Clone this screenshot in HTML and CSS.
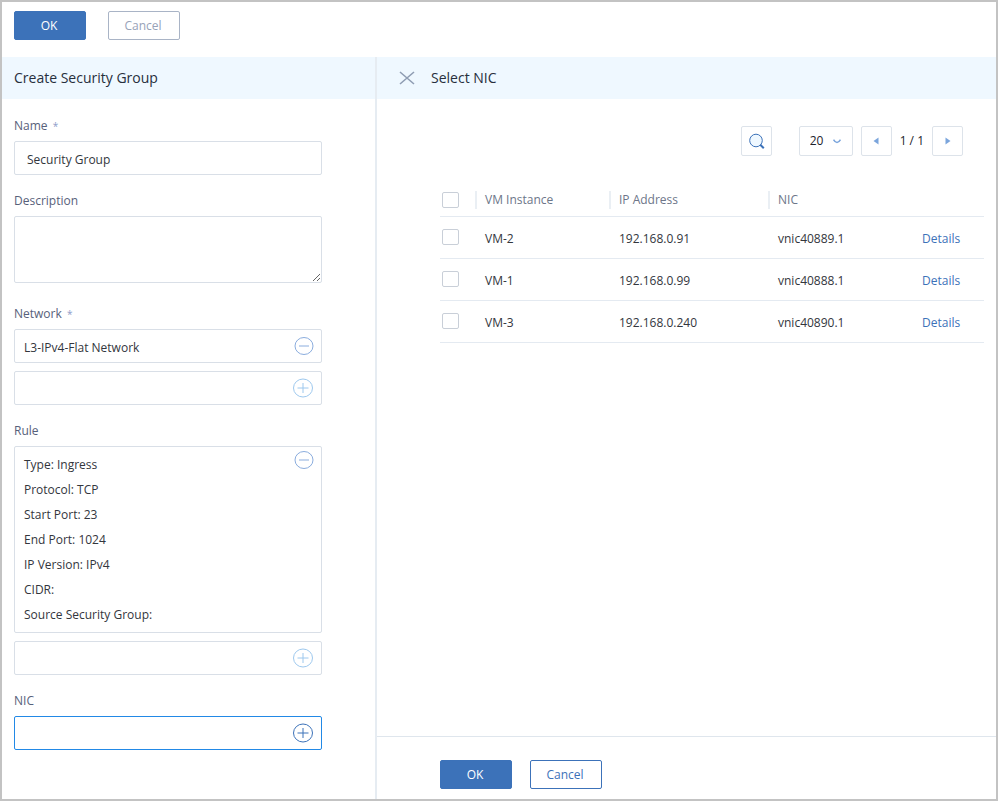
FILE: index.html
```html
<!DOCTYPE html>
<html lang="en">
<head>
<meta charset="UTF-8">
<meta name="viewport" content="width=device-width, initial-scale=1.0">
<title>Create Security Group</title>
<link rel="stylesheet" href="styles.css">
</head>
<body>

<div class="page">
  <header class="topbar">
    <button type="button" class="btn btn-primary">OK</button>
    <button type="button" class="btn btn-muted">Cancel</button>
  </header>

  <div class="content">
    <section class="form-panel">
      <h2 class="panel-title">Create Security Group</h2>
      <form class="form">
        <div class="field">
          <label for="name">Name <span class="required">*</span></label>
          <input type="text" id="name" class="box text-input" value="Security Group">
        </div>
        <div class="field field-description">
          <label for="description">Description</label>
          <textarea id="description" class="box"></textarea>
        </div>
        <div class="field">
          <h3 class="field-label">Network <span class="required">*</span></h3>
          <div class="box picker">
            <span>L3-IPv4-Flat Network</span>
            <button type="button" class="icon-btn minus" aria-label="Remove network">
              <svg width="20" height="20" viewBox="0 0 20 20"><ellipse cx="10" cy="10" rx="9" ry="8.5"/><path d="M5 10h10"/></svg>
            </button>
          </div>
          <div class="box picker">
            <button type="button" class="icon-btn plus" aria-label="Add network">
              <svg width="20" height="20" viewBox="0 0 20 20"><ellipse cx="10" cy="10" rx="9.5" ry="9"/><path d="M4.500 10h11M10 5v10"/></svg>
            </button>
          </div>
        </div>
        <div class="field">
          <h3 class="field-label">Rule</h3>
          <div class="box rule">
            <ul class="rule-list">
              <li>Type: Ingress</li>
              <li>Protocol: TCP</li>
              <li>Start Port: 23</li>
              <li>End Port: 1024</li>
              <li>IP Version: IPv4</li>
              <li>CIDR:</li>
              <li>Source Security Group:</li>
            </ul>
            <button type="button" class="icon-btn minus" aria-label="Remove rule">
              <svg width="20" height="20" viewBox="0 0 20 20"><ellipse cx="10" cy="10" rx="9" ry="8.5"/><path d="M5 10h10"/></svg>
            </button>
          </div>
          <div class="box picker">
            <button type="button" class="icon-btn plus" aria-label="Add rule">
              <svg width="20" height="20" viewBox="0 0 20 20"><ellipse cx="10" cy="10" rx="9.5" ry="9"/><path d="M4.500 10h11M10 5v10"/></svg>
            </button>
          </div>
        </div>
        <div class="field">
          <h3 class="field-label">NIC</h3>
          <div class="box picker active">
            <button type="button" class="icon-btn plus" aria-label="Add NIC">
              <svg width="20" height="20" viewBox="0 0 20 20"><ellipse cx="10" cy="10" rx="9.500" ry="9"/><path d="M4.500 10h11M10 5v10"/></svg>
            </button>
          </div>
        </div>
      </form>
    </section>

    <section class="nic-panel">
      <div class="panel-title nic-title">
        <button type="button" class="close" aria-label="Close">
          <svg width="16" height="14" viewBox="0 0 16 14"><path d="M1 1l14 12M15 1L1 13"/></svg>
        </button>
        <h2>Select NIC</h2>
      </div>

      <div class="toolbar">
        <button type="button" class="tool search" aria-label="Search">
          <svg width="17" height="17" viewBox="0 0 17 17"><circle cx="8" cy="7.500" r="6.300"/><path d="M12.300 11.800l3.500 3.500" stroke-width="2"/></svg>
        </button>
        <div class="page-size">
          <select class="tool" aria-label="Rows per page">
            <option>20</option>
            <option>50</option>
            <option>100</option>
          </select>
          <svg class="chevron" width="8" height="5" viewBox="0 0 8 5"><path d="M.5 .7Q2 3.500 4 3.500T7.500 .7"/></svg>
        </div>
        <button type="button" class="tool" aria-label="Previous page">
          <svg width="6" height="8" viewBox="0 0 6 8"><path class="arrow" d="M5.500 .5v7L.5 4z"/></svg>
        </button>
        <span class="page-number">1 / 1</span>
        <button type="button" class="tool" aria-label="Next page">
          <svg width="6" height="8" viewBox="0 0 6 8"><path class="arrow" d="M.5 .5v7L5.500 4z"/></svg>
        </button>
      </div>

      <div class="table-wrap">
        <table class="nic-table">
          <thead>
            <tr>
              <th class="col-check"><input type="checkbox" aria-label="Select all"></th>
              <th class="col-vm"><span>VM Instance</span></th>
              <th class="col-ip"><span>IP Address</span></th>
              <th><span>NIC</span></th>
              <th class="col-details"></th>
            </tr>
          </thead>
          <tbody>
            <tr>
              <td><input type="checkbox" aria-label="Select VM-2"></td>
              <td>VM-2</td>
              <td>192.168.0.91</td>
              <td>vnic40889.1</td>
              <td><a href="#">Details</a></td>
            </tr>
            <tr>
              <td><input type="checkbox" aria-label="Select VM-1"></td>
              <td>VM-1</td>
              <td>192.168.0.99</td>
              <td>vnic40888.1</td>
              <td><a href="#">Details</a></td>
            </tr>
            <tr>
              <td><input type="checkbox" aria-label="Select VM-3"></td>
              <td>VM-3</td>
              <td>192.168.0.240</td>
              <td>vnic40890.1</td>
              <td><a href="#">Details</a></td>
            </tr>
          </tbody>
        </table>
      </div>

      <footer class="nic-footer">
        <button type="button" class="btn btn-primary">OK</button>
        <button type="button" class="btn btn-outline">Cancel</button>
      </footer>
    </section>
  </div>
</div>

</body>
</html>
```
FILE: styles.css
```css
* {
  box-sizing: border-box;
}
body {
  margin: 0;
  font-family: "Open Sans", "Noto Sans", sans-serif;
  font-size: 12px;
  line-height: 18px;
  color: #33363d;
  background-color: #fff;
}
button, input, select, textarea {
  font: inherit;
  color: inherit;
}
button {
  padding: 0;
  background: none;
  border: none;
  cursor: pointer;
}
h2, h3 {
  margin: 0;
  font-weight: normal;
}
svg {
  display: block;
  fill: none;
}
.page {
  min-height: 100vh;
  display: flex;
  flex-direction: column;
  border: 2px solid #c3c3c3;
}

/* buttons */
.topbar {
  display: flex;
  gap: 22px;
  padding: 9px 12px 17px;
}
.btn {
  width: 72px;
  height: 29px;
  padding-right: 2px;
  border: 1px solid #3c72b9;
  border-radius: 2px;
}
.btn-primary {
  background-color: #3c72b9;
  color: #fff;
}
.btn-muted {
  border-color: #a9b4c6;
  color: #97a2b8;
}
.btn-outline {
  background-color: #fff;
  color: #3c72b9;
}

/* panels */
.content {
  flex: 1;
  display: flex;
}
.form-panel {
  width: 375px;
  border-right: 2px solid #e6ecf2;
}
.nic-panel {
  flex: 1;
  display: flex;
  flex-direction: column;
}
.panel-title, .nic-title h2 {
  font-size: 14px;
}
.panel-title {
  height: 42px;
  padding: 0 12px;
  line-height: 42px;
  color: #272f3d;
  background-color: #eff8ff;
}

/* form */
.form {
  padding: 1px 12px 0;
  max-width: 332px;
}
.field {
  display: flex;
  flex-direction: column;
  padding-top: 17px;
}
.field-description {
  padding-bottom: 5px;
}
.field label, .field-label {
  margin-bottom: 6px;
  font-size: 12px;
  line-height: 18px;
  color: #57617a;
}
.required {
  margin-left: 2px;
  font-size: 10px;
  line-height: 10px;
  color: #8d9cc9;
}
.box {
  border: 1px solid #d9dfe7;
  border-radius: 2px;
  background-color: #fff;
}
.box + .box {
  margin-top: 8px;
}
.text-input {
  height: 34px;
  padding: 2px 12px 0;
}
textarea {
  height: 67px;
  padding: 8px 12px;
  resize: vertical;
}
.picker {
  display: flex;
  align-items: center;
  height: 34px;
  padding: 0 7px 0 9px;
}
.picker span {
  padding-top: 3px;
}
.icon-btn {
  margin-left: auto;
  stroke: #8badde;
}
.plus {
  margin-right: 1px;
  stroke: #9dc8ee;
}
.active {
  border-color: #2289e6;
}
.active .plus {
  stroke: #3c72b9;
}
.rule {
  display: flex;
  align-items: flex-start;
  padding: 3px 7px 4px 9px;
}
.rule-list {
  margin: 0;
  padding: 2px 0 1px;
  list-style-type: none;
  line-height: 25px;
}

/* select nic */
.nic-title {
  display: flex;
  align-items: center;
  gap: 16px;
  padding: 0 22px;
}
.close {
  stroke: #8f9db3;
  stroke-width: 1.6;
}
.toolbar {
  display: flex;
  justify-content: flex-end;
  align-items: center;
  gap: 8px;
  padding: 27px 33px 26px 63px;
}
.tool {
  display: flex;
  justify-content: center;
  align-items: center;
  width: 31px;
  height: 30px;
  border: 1px solid #dde3ea;
  border-radius: 2px;
  background-color: #fff;
}
.search {
  margin-right: 19px;
  stroke: #3c72b9;
}
.search circle {
  fill: #eff8ff;
}
.page-size {
  display: grid;
  align-items: center;
}
.page-size > * {
  grid-area: 1 / 1;
}
.page-size select {
  width: 54px;
  padding-left: 10px;
  color: #1d222b;
  appearance: none;
}
.chevron {
  justify-self: end;
  margin-right: 12px;
  stroke: #7ba5dc;
  stroke-width: 1.5;
  pointer-events: none;
}
.arrow {
  fill: #7ba5dc;
}
.page-number {
  color: #1d222b;
}
.table-wrap {
  flex: 1;
  padding: 0 12px 0 63px;
}
.nic-table {
  width: 100%;
  table-layout: fixed;
  border-collapse: collapse;
}
.nic-table th, .nic-table td {
  height: 42px;
  padding: 3px 0 0 10px;
  text-align: left;
  font-weight: normal;
  border-bottom: 1px solid #e4eaf1;
}
.nic-table th {
  height: 34px;
  padding: 2px 0 0;
  color: #6d7689;
}
.nic-table th span {
  display: block;
  padding-left: 8px;
  border-left: 2px solid #eaeff4;
}
.nic-table td:first-child {
  padding: 0;
}
.nic-table .col-check {
  width: 35px;
}
.nic-table .col-vm {
  width: 134px;
}
.nic-table .col-ip {
  width: 159px;
}
.nic-table .col-details {
  width: 72px;
}
.nic-table input {
  display: block;
  width: 17px;
  height: 16px;
  margin: 0 0 0 2px;
  appearance: none;
  border: 1px solid #c9cfd8;
  border-radius: 2px;
}
.nic-table input:checked {
  background-color: #3c72b9;
}
.nic-table a {
  color: #3c72b9;
  text-decoration: none;
}
.nic-footer {
  display: flex;
  gap: 18px;
  padding: 23px 63px 10px;
  border-top: 1px solid #dfe6ed;
}
```
